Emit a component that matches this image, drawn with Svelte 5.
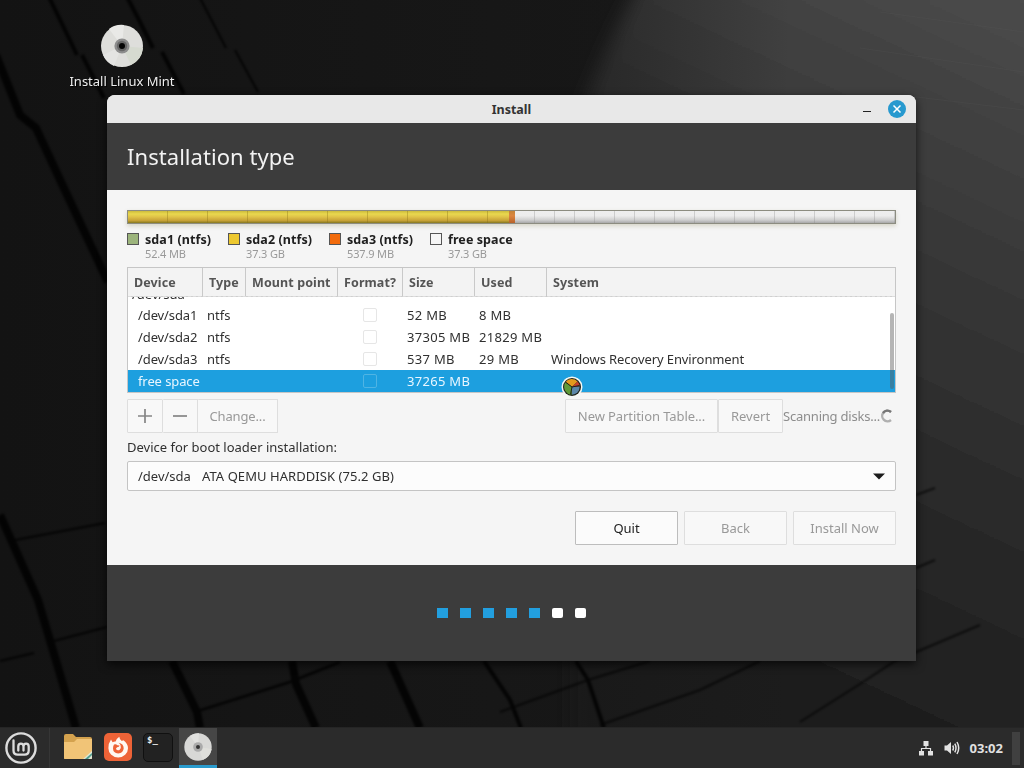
<script>
  // Disk layout shown in the legend
  let partitions = [
    { name: 'sda1 (ntfs)', size: '52.4 MB', color: '#9cb47c' },
    { name: 'sda2 (ntfs)', size: '37.3 GB', color: '#edc82f' },
    { name: 'sda3 (ntfs)', size: '537.9 MB', color: '#f26b0c' },
    { name: 'free space', size: '37.3 GB', color: '#f5f5f5' },
  ];

  let columns = ['Device', 'Type', 'Mount point', 'Format?', 'Size', 'Used', 'System'];

  let rows = [
    { device: '/dev/sda1', type: 'ntfs', size: '52 MB', used: '8 MB', system: '' },
    { device: '/dev/sda2', type: 'ntfs', size: '37305 MB', used: '21829 MB', system: '' },
    { device: '/dev/sda3', type: 'ntfs', size: '537 MB', used: '29 MB', system: 'Windows Recovery Environment' },
    { device: 'free space', type: '', size: '37265 MB', used: '', system: '' },
  ];

  let selected = 3;
  let step = 5;
  let steps = [1, 2, 3, 4, 5, 6, 7];

  function selectRow(i) {
    selected = i;
  }
</script>

<main class="desktop">
  <svg class="wallpaper" viewBox="0 0 1024 768" preserveAspectRatio="none">
    <defs>
      <linearGradient id="base" x1="0" y1="0" x2="1" y2="0">
        <stop offset="0" stop-color="#131313" />
        <stop offset="0.6" stop-color="#181818" />
        <stop offset="1" stop-color="#222" />
      </linearGradient>
      <linearGradient id="sheen" x1="1" y1="0" x2="0.72" y2="1">
        <stop offset="0" stop-color="#4d4d4d" />
        <stop offset="0.35" stop-color="#383838" />
        <stop offset="0.7" stop-color="#272727" />
        <stop offset="1" stop-color="#1c1c1c" />
      </linearGradient>
      <linearGradient id="fade" x1="0" y1="0" x2="1" y2="0">
        <stop offset="0" stop-color="#161616" />
        <stop offset="1" stop-color="#161616" stop-opacity="0" />
      </linearGradient>
      <filter id="soft"><feGaussianBlur stdDeviation="1.3" /></filter>
      <filter id="softer"><feGaussianBlur stdDeviation="9" /></filter>
    </defs>
    <rect width="1024" height="768" fill="url(#base)" />
    <path d="M642 -20 Q600 55 570 140 V790 H1050 V-20Z" fill="url(#sheen)" filter="url(#softer)" />
    <rect x="530" y="0" width="260" height="768" fill="url(#fade)" opacity="0.6" />
    <g fill="none" stroke="#060606" filter="url(#soft)" opacity="0.8">
      <path stroke-width="4" d="M48 -5L64 28L77 55M82 55L104 98M126 -5L139 20L153 48M162 52L184 94" />
      <path stroke-width="2" d="M200 -2L226 48M235 50L258 92" />
      <path stroke-width="8" d="M-4 55L20 115L36 128L62 184L108 282M0 515L38 600L76 728" />
      <path stroke-width="2" d="M10 541L105 523M50 642L107 627M0 661L34 653" />
      <path stroke-width="8" d="M172 661L197 712L200 728M292 661L296 684L316 728M390 661L420 728" />
      <path stroke-width="2.5" d="M198 711L290 682L340 662" />
      <path stroke-width="4" d="M484 661L510 700L521 728M576 661L588 680L604 728" />
      <path stroke-width="2" d="M500 712L588 680L650 661M600 725L700 690L760 661M800 722L860 684L895 661L980 625M916 495L935 488M916 568L935 560" opacity="0.8" />
    </g>
    <g fill="none" stroke="#606060" stroke-width="1" opacity="0.18">
      <path d="M880 12L1024 32M860 48L1024 72M900 95L1024 110" />
    </g>
  </svg>

  <div class="shortcut">
    <svg width="44" height="44" viewBox="0 0 44 44">
      <circle cx="22" cy="22" r="21" fill="#dededb" />
      <path d="M22 22L9 5A21 21 0 0 1 24 1Z" fill="#e9e9e7" />
      <path d="M22 22L43 24A21 21 0 0 1 31 41Z" fill="#d6dad0" />
      <path d="M22 22L14 42A21 21 0 0 1 3 31Z" fill="#e4e4e2" />
      <circle cx="22" cy="22" r="7.6" fill="#8d8d8d" />
      <circle cx="22" cy="22" r="5.2" fill="#676767" />
      <circle cx="22" cy="22" r="3" fill="#050505" />
    </svg>
    <span>Install Linux Mint</span>
  </div>

  <section class="window">
    <div class="titlebar">
      <span class="title">Install</span>
      <div class="controls">
        <i class="minimize"></i>
        <svg width="18" height="18" viewBox="0 0 18 18">
          <circle cx="9" cy="9" r="9" fill="#2799cf" />
          <path d="M5.5 5.5L12.5 12.5M12.5 5.5L5.5 12.5" stroke="#fff" stroke-width="1.5" />
        </svg>
      </div>
    </div>

    <header><h1>Installation type</h1></header>

    <div class="content">
      <div class="disk">
        <div class="used"></div>
        <div class="recovery"></div>
        <div class="free"></div>
      </div>

      <div class="legend">
        {#each partitions as part}
          <div class="entry">
            <i style="background-color: {part.color}"></i>
            <div>
              <b>{part.name}</b>
              <small>{part.size}</small>
            </div>
          </div>
        {/each}
      </div>

      <div class="table">
        <div class="row head">
          {#each columns as column}
            <span>{column}</span>
          {/each}
        </div>
        <div class="rows">
          <div class="row parent"><span>/dev/sda</span></div>
          {#each rows as row, i}
            <!-- svelte-ignore a11y_click_events_have_key_events, a11y_no_static_element_interactions -->
            <div class="row" class:selected={selected === i} on:click={() => selectRow(i)}>
              <span class="device">{row.device}</span>
              <span>{row.type}</span>
              <span></span>
              <span class="format"><i class="check"></i></span>
              <span class="num">{row.size}</span>
              <span class="num">{row.used}</span>
              <span class="system">{row.system}</span>
            </div>
          {/each}
          <div class="scrollbar"></div>
        </div>
      </div>

      <div class="toolbar">
        <div class="group">
          <button class="icon" disabled aria-label="Add">
            <svg width="16" height="16" viewBox="0 0 16 16"><path d="M1 8H15M8 1V15" stroke="#858585" stroke-width="1.7" /></svg>
          </button>
          <button class="icon minus" disabled aria-label="Remove">
            <svg width="16" height="16" viewBox="0 0 16 16"><path d="M1 8H15" stroke="#858585" stroke-width="1.7" /></svg>
          </button>
          <button class="change" disabled>Change...</button>
        </div>
        <div class="group">
          <button class="new-table" disabled>New Partition Table...</button>
          <button class="revert" disabled>Revert</button>
          <span class="scanning">Scanning disks...</span>
          <svg class="spinner" width="14" height="14" viewBox="0 0 14 14">
            <path d="M11 3A5.3 5.3 0 1 0 11 11" fill="none" stroke="#b0b0b0" stroke-width="2.4" />
            <path d="M3 4A5.3 5.3 0 0 1 11 3" fill="none" stroke="#777" stroke-width="2.4" />
          </svg>
        </div>
      </div>

      <p class="label">Device for boot loader installation:</p>
      <div class="combo">
        <span class="path">/dev/sda</span>
        <span class="model">ATA QEMU HARDDISK (75.2 GB)</span>
        <svg width="12" height="7" viewBox="0 0 12 7"><path d="M0 0.5H12L6 6.5Z" fill="#1c1c1c" /></svg>
      </div>

      <div class="actions">
        <button class="quit">Quit</button>
        <button disabled>Back</button>
        <button disabled class="install">Install Now</button>
      </div>
    </div>

    <footer>
      {#each steps as n}
        <i class:done={n <= step}></i>
      {/each}
    </footer>
  </section>

  <svg class="cursor" width="22" height="22" viewBox="0 0 22 22">
    <circle cx="11" cy="11" r="10.5" fill="#f4f8f4" />
    <circle cx="11" cy="11" r="9" fill="#20241c" />
    <path d="M11 11L4.5 6A8 8 0 0 1 16.5 5.5Z" fill="#e39a1e" />
    <path d="M11 11L16.5 5.5A8 8 0 0 1 18.7 10Z" fill="#c9402a" />
    <path d="M11 11L18.7 10.5A8 8 0 0 1 11 18.7Z" fill="#5a86a8" />
    <path d="M11 11L10.5 18.7A8 8 0 0 1 4.3 6.5Z" fill="#5f9a38" />
    <path d="M11 11L4.5 6M11 11L18.5 9.5M11 11L9.5 18.5" stroke="#20241c" stroke-width="1" />
  </svg>

  <nav class="panel">
    <div class="launchers">
      <span class="menu">
        <svg width="32" height="32" viewBox="0 0 32 32" fill="none" stroke="#dcdcdc">
          <circle cx="16" cy="16" r="14.6" stroke-width="2.4" />
          <path d="M8.5 8.5V18.5Q8.5 22.7 12.7 22.7H19.5Q23.7 22.7 23.7 18.5V14.4Q23.7 11.7 21.1 11.7Q18.5 11.7 18.5 14.4V18.5M18.5 14.4Q18.5 11.7 15.9 11.7Q13.3 11.7 13.3 14.4V18.5" stroke-width="2.3" stroke-linecap="round" />
        </svg>
      </span>
      <span class="app">
        <svg width="30" height="28" viewBox="0 0 30 28">
          <path d="M1 3Q1 1 3 1H10L13 4H27Q29 4 29 6V25Q29 26 28 26H2Q1 26 1 25Z" fill="#d4a24e" />
          <path d="M1 9H11L14 6H29V25Q29 26 28 26H2Q1 26 1 25Z" fill="#f1c477" />
          <path d="M20 26L29 18V25Q29 26 28 26Z" fill="#dfe5d4" />
          <path d="M22 26L29 20V22L25 26Z" fill="#4f9c8c" />
        </svg>
      </span>
      <span class="app">
        <svg width="28" height="28" viewBox="0 0 28 28">
          <rect width="28" height="28" rx="5" fill="#ee6337" />
          <path d="M7 6.5L8.6 9.2Q10 8.4 11.6 8.5Q12.6 5.5 15.3 3.8Q15.4 6.5 17.8 8L19.4 7.2Q24 10.5 24 15.2A9.8 9.4 0 0 1 4.4 15.2Q4.2 10.5 7 6.5Z" fill="#fff8f2" />
          <path d="M10 11.6Q12 10.8 13.4 12.2L15.6 12.4Q15.2 13.8 13.2 14.2Q11.4 15.2 12.3 16.6Q13.6 17.8 15.5 16.9Q17.6 15.4 16.6 12.6Q16.1 11 14.6 9.8Q19.6 10.8 19.7 15.2Q19.3 20.2 14.2 20.4Q9.2 20 9 15.4Q9 13.2 10 11.6Z" fill="#ee6337" />
        </svg>
      </span>
      <span class="app">
        <span class="terminal">$_</span>
      </span>
      <span class="app active">
        <svg width="28" height="28" viewBox="0 0 28 28">
          <circle cx="14" cy="14" r="13.7" fill="#d8d8d6" />
          <path d="M14 14L6 3A13.7 13.7 0 0 1 15 .3Z" fill="#e1e1df" />
          <path d="M14 14L27.6 16A13.7 13.7 0 0 1 19 26.7Z" fill="#dfdfdb" />
          <circle cx="14" cy="14" r="4.8" fill="#aaa" />
          <circle cx="14" cy="14" r="2" fill="#333" />
        </svg>
      </span>
    </div>
    <div class="tray">
      <svg width="16" height="16" viewBox="0 0 16 16" fill="#e2e2e2">
        <path d="M5.5 1H10.5V6H5.5ZM1 11H6V15.5H1ZM10 11H15V15.5H10Z" />
        <path d="M8 5V8.5M3.5 12V8.5H12.5V12" fill="none" stroke="#e2e2e2" stroke-width="1.2" />
      </svg>
      <svg width="16" height="14" viewBox="0 0 16 14" fill="none" stroke="#e2e2e2">
        <path d="M0.5 4.5H3L7 1V13L3 9.5H0.5Z" fill="#e2e2e2" stroke="none" />
        <path d="M8.7 4.5Q10.2 7 8.7 9.5M10.8 2.7Q13.2 7 10.8 11.3M13 1Q16.4 7 13 13" stroke-width="1.5" />
      </svg>
      <b class="clock">03:02</b>
      <i class="corner"></i>
    </div>
  </nav>
</main>

<style>
  :global(body) {
    overflow: hidden;
  }

  .desktop {
    position: relative;
    width: 1024px;
    height: 768px;
    overflow: hidden;
    background-color: #151515;
    font-family: "Noto Sans", "Open Sans", sans-serif;
    font-size: 13px;
    line-height: 18px;
    color: #303030;
  }

  .wallpaper {
    position: absolute;
    inset: 0;
    width: 100%;
    height: 100%;
  }

  .shortcut {
    position: absolute;
    left: 62px;
    top: 24px;
    width: 120px;
    display: flex;
    flex-direction: column;
    align-items: center;
    gap: 4px;
    color: #eee;
    white-space: nowrap;
    text-shadow: 1px 1px 1px #000;
  }

  .window {
    position: absolute;
    left: 107px;
    top: 95px;
    width: 809px;
    height: 566px;
    display: flex;
    flex-direction: column;
    border-radius: 8px 8px 0 0;
    overflow: hidden;
    background-color: #f5f5f5;
    box-shadow: 0 3px 10px rgba(0, 0, 0, 0.7);
  }

  .titlebar {
    height: 28px;
    display: grid;
    grid-template-columns: 1fr auto 1fr;
    align-items: center;
    background-color: #e8e8e8;
  }

  .title {
    grid-column: 2;
    padding-top: 1px;
    font-weight: bold;
    font-size: 12.5px;
    color: #333;
  }

  .controls {
    display: flex;
    justify-content: flex-end;
    align-items: center;
    gap: 17px;
    padding-right: 10px;
  }

  .minimize {
    width: 8px;
    height: 1px;
    margin-top: 4px;
    background-color: #222;
  }

  header {
    height: 67px;
    display: flex;
    align-items: center;
    padding-left: 20px;
    padding-bottom: 2px;
    box-sizing: border-box;
    background-color: #3c3c3c;
  }

  h1 {
    margin: 0;
    font-size: 22px;
    font-weight: normal;
    color: #f2f2f2;
    letter-spacing: 0.05px;
  }

  .content {
    height: 375px;
    box-sizing: border-box;
    padding: 20px 20px 0;
    display: flex;
    flex-direction: column;
  }

  .disk {
    height: 14px;
    box-sizing: border-box;
    display: flex;
    flex: none;
    border: 1px solid #8c8c80;
    box-shadow: 0 2px 4px rgba(120, 110, 60, 0.25);
  }

  .used {
    width: 381px;
    background: repeating-linear-gradient(90deg, transparent 0 39px, rgba(130, 110, 20, 0.35) 39px 40px),
      linear-gradient(#cdbb3c, #e9d84f 25%, #dfc248 50%, #c6a136 80%, #85781f);
  }

  .recovery {
    width: 6px;
    background: linear-gradient(#c48438, #dd8640 40%, #b8622a);
  }

  .free {
    flex: 1;
    background: repeating-linear-gradient(90deg, transparent 0 19px, rgba(130, 130, 130, 0.3) 19px 20px),
      linear-gradient(#eee, #ececec 40%, #cfcfcf 75%, #a8a8a8);
  }

  .legend {
    display: flex;
    height: 43px;
    flex: none;
    padding-top: 6px;
    box-sizing: border-box;
  }

  .entry {
    display: flex;
    gap: 6px;
    width: 101px;
    white-space: nowrap;
  }

  .entry i {
    width: 12px;
    height: 12px;
    margin-top: 3px;
    box-sizing: border-box;
    border: 1px solid #555;
  }

  .entry b,
  .entry small {
    display: block;
  }

  .entry b {
    color: #202020;
    font-size: 12.5px;
    line-height: 20px;
    letter-spacing: 0.08px;
  }

  .entry small {
    font-size: 11px;
    line-height: 12px;
    margin-top: -2px;
    color: #999;
    letter-spacing: -0.15px;
  }

  .table {
    height: 126px;
    flex: none;
    box-sizing: border-box;
    border: 1px solid #c6c6c6;
    background-color: #fff;
    display: flex;
    flex-direction: column;
  }

  .row {
    height: 22px;
    flex: none;
    display: grid;
    grid-template-columns: 75px 43px 92px 65px 72px 72px 1fr;
    align-items: center;
    white-space: nowrap;
  }

  .row span {
    padding-left: 4px;
  }

  .row .num {
    letter-spacing: 0.3px;
  }

  .row .system {
    letter-spacing: -0.1px;
  }

  .head {
    height: 29px;
    align-items: stretch;
    background-color: #f3f3f3;
    border-bottom: 1px solid #cfcfcf;
    box-sizing: border-box;
  }

  .head span {
    padding-left: 6px;
    line-height: 29px;
    font-weight: bold;
    font-size: 12.5px;
    letter-spacing: 0.1px;
    color: #555;
    border-right: 1px solid #c9c9c9;
  }

  .head span:last-child {
    border-right: none;
  }

  .rows {
    position: relative;
    flex: 1;
    display: flex;
    flex-direction: column;
    justify-content: flex-end;
    overflow: hidden;
    border-top: 1px dashed #ddd;
    margin-top: -1px;
  }

  /* scrolled almost out of view */
  .parent {
    align-items: end;
    height: 20px;
    margin-bottom: 2px;
    line-height: 16px;
  }

  .row .device {
    padding-left: 10px;
    letter-spacing: -0.1px;
  }

  .row .format {
    display: flex;
    justify-content: center;
    padding-left: 0;
    padding-right: 2px;
  }

  .check {
    width: 14px;
    height: 14px;
    box-sizing: border-box;
    border: 1px solid #e6e6e6;
    border-radius: 2px;
  }

  .selected {
    background-color: #1d9fdf;
    color: #e8f6ff;
  }

  .selected .check {
    border-color: #4fb4e4;
  }

  .scrollbar {
    position: absolute;
    right: 1px;
    top: 16px;
    bottom: 3px;
    width: 4px;
    border-radius: 2px;
    background-color: rgba(90, 90, 90, 0.45);
  }

  .toolbar {
    display: flex;
    justify-content: space-between;
    margin-top: 6px;
  }

  .group {
    display: flex;
    align-items: center;
  }

  button {
    height: 34px;
    box-sizing: border-box;
    padding: 0;
    display: flex;
    align-items: center;
    justify-content: center;
    border: 1px solid #dedede;
    border-radius: 1px;
    background-color: #f8f8f8;
    font-family: inherit;
    font-size: 13px;
    color: #999;
    white-space: nowrap;
  }

  .icon {
    width: 36px;
  }

  .minus {
    width: 35px;
    border-left: none;
  }

  .change {
    width: 80px;
    border-left: none;
    letter-spacing: -0.15px;
  }

  .new-table {
    width: 153px;
    letter-spacing: -0.08px;
  }

  .revert {
    width: 65px;
  }

  .scanning {
    width: 97px;
    color: #8d8d8d;
    white-space: nowrap;
    letter-spacing: -0.22px;
  }

  .spinner {
    margin-right: 2px;
  }

  .label {
    margin: 5px 0;
  }

  .combo {
    height: 30px;
    flex: none;
    box-sizing: border-box;
    border: 1px solid #c4c4c4;
    border-radius: 2px;
    background-color: #fcfcfc;
    display: flex;
    align-items: center;
    padding: 0 10px;
  }

  .path {
    width: 64px;
  }

  .model {
    flex: 1;
    letter-spacing: 0.06px;
  }

  .actions {
    display: flex;
    justify-content: flex-end;
    gap: 6px;
    margin-top: 20px;
  }

  .actions button {
    width: 103px;
  }

  .actions .quit {
    color: #222;
    border-color: #bdbdbd;
    background-color: #fbfbfb;
  }

  footer {
    flex: 1;
    display: flex;
    align-items: center;
    justify-content: center;
    gap: 12px;
    background-color: #3c3c3c;
  }

  footer i {
    width: 11px;
    height: 10px;
    border-radius: 2px;
    background-color: #fff;
  }

  footer .done {
    border-radius: 0;
    background-color: #229fdf;
  }

  .cursor {
    position: absolute;
    left: 561px;
    top: 376px;
  }

  .panel {
    position: absolute;
    left: 0;
    right: 0;
    bottom: 0;
    height: 41px;
    display: flex;
    justify-content: space-between;
    background-color: #2b2b2b;
    box-sizing: border-box;
    border-top: 1px solid #252525;
  }

  .launchers,
  .tray {
    display: flex;
    align-items: center;
  }

  .menu {
    width: 50px;
    height: 40px;
    margin-right: 8px;
    padding-left: 5px;
    box-sizing: border-box;
    display: flex;
    align-items: center;
    border-right: 1px solid #363636;
  }

  .app {
    width: 40px;
    height: 40px;
    display: flex;
    align-items: center;
    justify-content: center;
    padding-bottom: 2px;
    box-sizing: border-box;
  }

  .active {
    width: 38px;
    margin-left: 1px;
    background-color: #464646;
    border-bottom: 3px solid #2a9bcd;
    padding-bottom: 0;
  }

  .terminal {
    width: 30px;
    height: 29px;
    box-sizing: border-box;
    padding-left: 3px;
    border: 1px solid #101010;
    border-radius: 5px;
    background-color: #222;
    font-family: "DejaVu Sans Mono", monospace;
    font-size: 9px;
    font-weight: bold;
    line-height: 12px;
    color: #eee;
  }

  .clock {
    margin-left: 10px;
    font-size: 13px;
    color: #e0e0e0;
  }

  .tray svg + svg {
    margin-left: 10px;
  }

  .corner {
    width: 8px;
    height: 33px;
    margin-left: 9px;
    margin-right: 4px;
    background-color: #404040;
  }
</style>
